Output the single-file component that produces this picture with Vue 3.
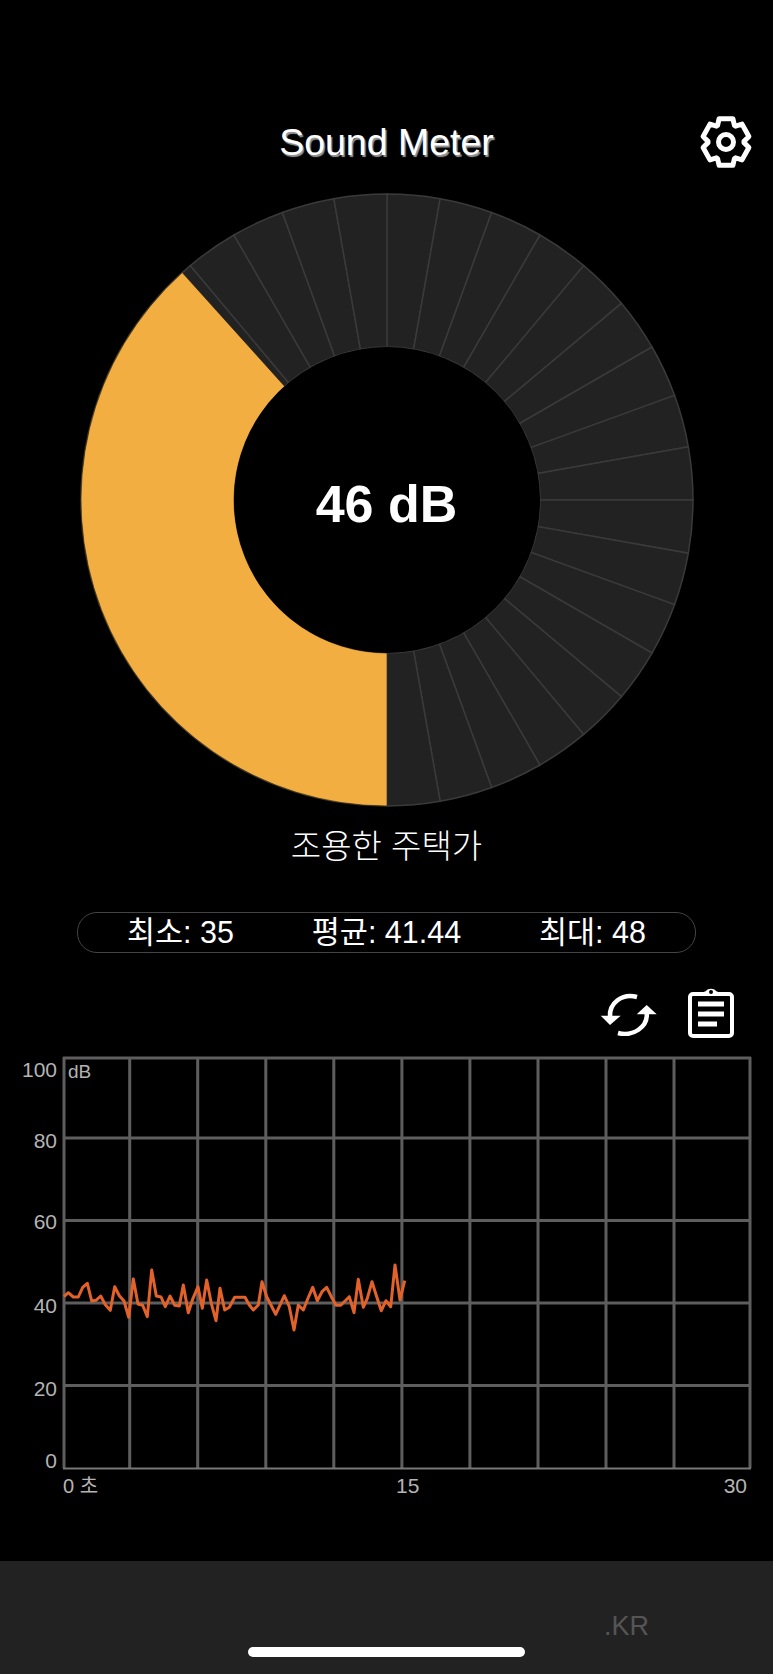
<script setup>
import { computed } from 'vue'

const level = 46
const stats = [
  { label: '최소', value: '35' },
  { label: '평균', value: '41.44' },
  { label: '최대', value: '48' },
]

// gauge: 120 dB = full turn, one wedge per 10 degrees
const cx = 307
const cy = 307
const outer = 306
const inner = 153

function polar(r, deg) {
  const a = ((deg - 90) * Math.PI) / 180
  return [(cx + r * Math.cos(a)).toFixed(2), (cy + r * Math.sin(a)).toFixed(2)]
}

function wedge(from, to) {
  const large = to - from > 180 ? 1 : 0
  const [x1, y1] = polar(outer, from)
  const [x2, y2] = polar(outer, to)
  const [x3, y3] = polar(inner, to)
  const [x4, y4] = polar(inner, from)
  return `M${x1} ${y1}A${outer} ${outer} 0 ${large} 1 ${x2} ${y2}L${x3} ${y3}A${inner} ${inner} 0 ${large} 0 ${x4} ${y4}Z`
}

const wedges = computed(() => {
  const list = []
  for (let d = 0; d < 360; d += 10) list.push(wedge(d, d + 10))
  return list
})
const activeWedge = computed(() => wedge(180, 180 + level * 3))

// gear outline with six teeth
const gearPath = computed(() => {
  const c = 30
  const pts = []
  for (let i = 0; i < 6; i++) {
    const t = i * 60
    const add = (r, d) => {
      const a = ((t + d - 90) * Math.PI) / 180
      pts.push(`${(c + r * Math.cos(a)).toFixed(2)} ${(c + r * Math.sin(a) * 1.04).toFixed(2)}`)
    }
    add(18, -28)
    add(23.5, -17)
    add(23.5, 17)
    add(18, 28)
  }
  return 'M' + pts.join('L') + 'Z'
})

const vLines = [64, 129.7, 197.7, 265.8, 333.8, 401.9, 469.9, 538, 606, 674, 750]
const hLines = [1058, 1138, 1220.5, 1303, 1385.5]
const yLabels = [
  { t: '100', y: 1077 },
  { t: '80', y: 1148 },
  { t: '60', y: 1229 },
  { t: '40', y: 1313 },
  { t: '20', y: 1396 },
  { t: '0', y: 1468 },
]

const samples = [
  [192, 200], [205, 188], [220, 201], [235, 201], [248, 172], [262, 160], [275, 213], [288, 211],
  [302, 198], [316, 224], [331, 241], [344, 170], [358, 197], [372, 213], [386, 262], [400, 147],
  [414, 222], [428, 226], [442, 260], [455, 120], [469, 198], [483, 201], [496, 230], [510, 198],
  [524, 226], [538, 228], [550, 165], [565, 248], [579, 205], [594, 170], [607, 235], [620, 150],
  [634, 220], [648, 272], [660, 175], [674, 240], [688, 232], [704, 202], [720, 202], [735, 202],
  [748, 225], [760, 240], [775, 225], [786, 155], [800, 200], [827, 253], [853, 197], [868, 230],
  [882, 300], [895, 225], [910, 240], [924, 205], [938, 172], [952, 212], [966, 185], [980, 172],
  [994, 200], [1008, 226], [1022, 226], [1036, 212], [1048, 200], [1062, 248], [1075, 148], [1090, 232],
  [1102, 205], [1116, 155], [1130, 200], [1144, 242], [1158, 212], [1172, 230], [1185, 105], [1200, 210],
  [1214, 152],
]
const trace = samples.map(([x, y]) => `${(x / 3).toFixed(1)},${(1230 + y / 3).toFixed(1)}`).join(' ')
</script>

<template>
  <div class="screen">
    <header class="topbar">
      <span></span>
      <h1 class="title">Sound Meter</h1>
      <button class="gear" type="button">
        <svg width="60" height="60" viewBox="0 0 60 60" fill="none" stroke="#fff" stroke-width="5" stroke-linejoin="round">
          <path :d="gearPath" />
          <circle cx="30" cy="30" r="7.500" />
        </svg>
      </button>
    </header>

    <div class="gauge">
      <svg width="614" height="614" viewBox="0 0 614 614">
        <path v-for="(d, i) in wedges" :key="i" :d="d" class="wedge" />
        <path :d="activeWedge" class="wedge-on" />
        <circle :cx="cx" :cy="cy" :r="inner" fill="#000" />
      </svg>
      <div class="reading">{{ level }} dB</div>
    </div>

    <p class="place">조용한 주택가</p>

    <div class="stats">
      <span v-for="s in stats" :key="s.label">{{ s.label }}: {{ s.value }}</span>
    </div>

    <div class="tools">
      <svg width="58" height="46" viewBox="600 990 58 46" fill="none" stroke="#fff" stroke-width="4.5">
        <path d="M610 1017C609 1003 622 993 637 997" />
        <path d="M600.700 1015.700H620.700L610 1025Z" fill="#fff" stroke="none" />
        <path d="M646.700 1013C648 1027 633 1037 618 1033" />
        <path d="M636.700 1014.300H656.700L646.700 1005Z" fill="#fff" stroke="none" />
      </svg>
      <svg width="48" height="52" viewBox="0 0 48 52" fill="none" stroke="#fff">
        <rect x="3" y="7" width="42" height="42" rx="3" stroke-width="4" />
        <path d="M15 7C15 5 18 5 19 4C21 1 27 1 29 4C30 5 33 5 33 7Z" fill="#fff" stroke="none" />
        <circle cx="24" cy="5" r="2" fill="#000" stroke="none" />
        <path d="M11 17H37M11 27H37M11 37H30" stroke-width="5" />
      </svg>
    </div>

    <svg class="chart" width="773" height="450" viewBox="0 1050 773 450">
      <g class="grid">
        <line v-for="x in vLines" :key="x" :x1="x" :x2="x" y1="1057" y2="1468" />
        <line v-for="y in hLines" :key="y" x1="63" x2="751" :y1="y" :y2="y" />
        <line x1="63" x2="751" y1="1468.500" y2="1468.500" class="base" />
      </g>
      <g class="tick">
        <text v-for="l in yLabels" :key="l.t" x="57" :y="l.y" text-anchor="end">{{ l.t }}</text>
        <text x="68" y="1078" class="unit">dB</text>
        <text x="63" y="1493" class="zero">0 초</text>
        <text x="396" y="1493">15</text>
        <text x="747" y="1493" text-anchor="end">30</text>
      </g>
      <polyline :points="trace" class="trace" />
    </svg>

    <footer class="footer">
      <span class="ad">.KR</span>
      <span class="home"></span>
    </footer>
  </div>
</template>

<style scoped>
.screen {
  display: flex;
  flex-direction: column;
  height: 1674px;
  background: #000;
  color: #fff;
  font-family: "Liberation Sans", "Noto Sans CJK KR", sans-serif;
  overflow: hidden;
}
.topbar {
  display: grid;
  grid-template-columns: 1fr auto 1fr;
  align-items: center;
  height: 64px;
  margin-top: 110px;
}
.title {
  margin: 0;
  font-size: 37.500px;
  font-weight: 400;
  text-shadow: 1.5px 1.5px 1px #999;
}
.gear {
  justify-self: end;
  width: 60px;
  height: 60px;
  margin-right: 17px;
  padding: 0;
  border: 0;
  background: none;
}
.gauge {
  position: relative;
  align-self: center;
  width: 614px;
  height: 614px;
  margin-top: 19px;
}
.gauge svg { display: block; }
.wedge {
  fill: #222;
  stroke: #3a3a3a;
  stroke-width: 1.5;
}
.wedge-on {
  fill: #f2ae40;
  stroke: #000;
  stroke-width: 0.5;
}
.reading {
  position: absolute;
  inset: 7px 0 0;
  display: flex;
  align-items: center;
  justify-content: center;
  font-size: 52px;
  font-weight: 700;
}
.place {
  margin: 20px 0 0;
  font-size: 33px;
  line-height: 40px;
  font-weight: 300;
  text-align: center;
}
.stats {
  display: flex;
  align-items: center;
  justify-content: space-between;
  box-sizing: border-box;
  width: 619px;
  height: 41px;
  margin: 45px 0 0 77px;
  padding: 0 49px 1px;
  border: 1px solid #444;
  border-radius: 20px;
  font-size: 30.500px;
  line-height: 1;
}
.tools {
  display: flex;
  align-items: center;
  justify-content: flex-end;
  gap: 29px;
  height: 55px;
  margin-top: 32px;
  padding-right: 38px;
}
.chart {
  display: block;
  margin-top: 10px;
}
.grid line {
  stroke: #5e5e5e;
  stroke-width: 3;
}
.grid .base {
  stroke: #777;
  stroke-width: 2;
}
.tick text {
  fill: #b4b4b4;
  font-size: 21px;
}
.tick .unit { font-size: 19px; }
.tick .zero { font-size: 20px; }
.trace {
  fill: none;
  stroke: #e2622a;
  stroke-width: 3;
  stroke-linejoin: round;
}
.footer {
  position: relative;
  display: flex;
  justify-content: flex-end;
  box-sizing: border-box;
  height: 113px;
  margin-top: auto;
  padding: 50px 124px 0 0;
  background: #222;
}
.ad {
  color: #555;
  font-size: 27px;
  line-height: 30px;
}
.home {
  position: absolute;
  left: 248px;
  bottom: 17px;
  width: 277px;
  height: 10px;
  border-radius: 5px;
  background: #fff;
}
</style>
